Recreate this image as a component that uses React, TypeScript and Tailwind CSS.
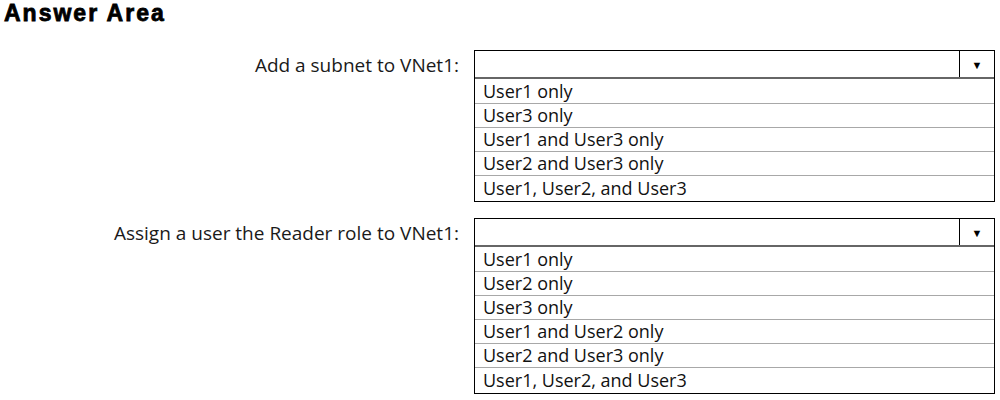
const QUESTIONS = [
  {
    label: "Add a subnet to VNet1:",
    options: ["User1 only", "User3 only", "User1 and User3 only", "User2 and User3 only", "User1, User2, and User3"],
  },
  {
    label: "Assign a user the Reader role to VNet1:",
    options: ["User1 only", "User2 only", "User3 only", "User1 and User2 only", "User2 and User3 only", "User1, User2, and User3"],
  },
];

function Dropdown({ options }: { options: string[] }) {
  return (
    <div className="w-[521px] border border-black bg-white">
      {/* closed select */}
      <div className="flex h-[28px] border-b-2 border-[#666]">
        <div className="flex-1" />
        <div className="flex w-[35px] items-center justify-center border-l border-black">
          <span className="text-[11px] leading-none text-black">▼</span>
        </div>
      </div>
      <div className="pt-[1px]">
        {options.map((opt, i) => {
          const last = i === options.length - 1;
          return (
            <div
              key={i}
              className={`px-[8px] text-[18px] text-[#111] ${
                last ? "h-[25px] leading-[24px]" : "h-[24px] border-b border-[#a8a8a8] leading-[23px]"
              }`}
            >
              {opt}
            </div>
          );
        })}
      </div>
    </div>
  );
}

export default function App() {
  return (
    <div className="h-[400px] w-[1000px] bg-white font-['Open_Sans',sans-serif] text-[#111]">
      <h1 className="px-[4px] font-['Liberation_Sans',Arial,sans-serif] text-[23px] font-bold leading-[27px] tracking-[2px] text-black [-webkit-text-stroke:0.8px_black]">
        Answer Area
      </h1>
      <div className="mt-[23px] flex flex-col gap-[16px]">
        {QUESTIONS.map((q, i) => (
          <div key={i} className="flex items-start">
            <div className="flex h-[30px] w-[459px] items-center justify-end text-[19px] text-[#1a1a1a]">
              {q.label}
            </div>
            <div className="ml-[15px]">
              <Dropdown options={q.options} />
            </div>
          </div>
        ))}
      </div>
    </div>
  );
}
